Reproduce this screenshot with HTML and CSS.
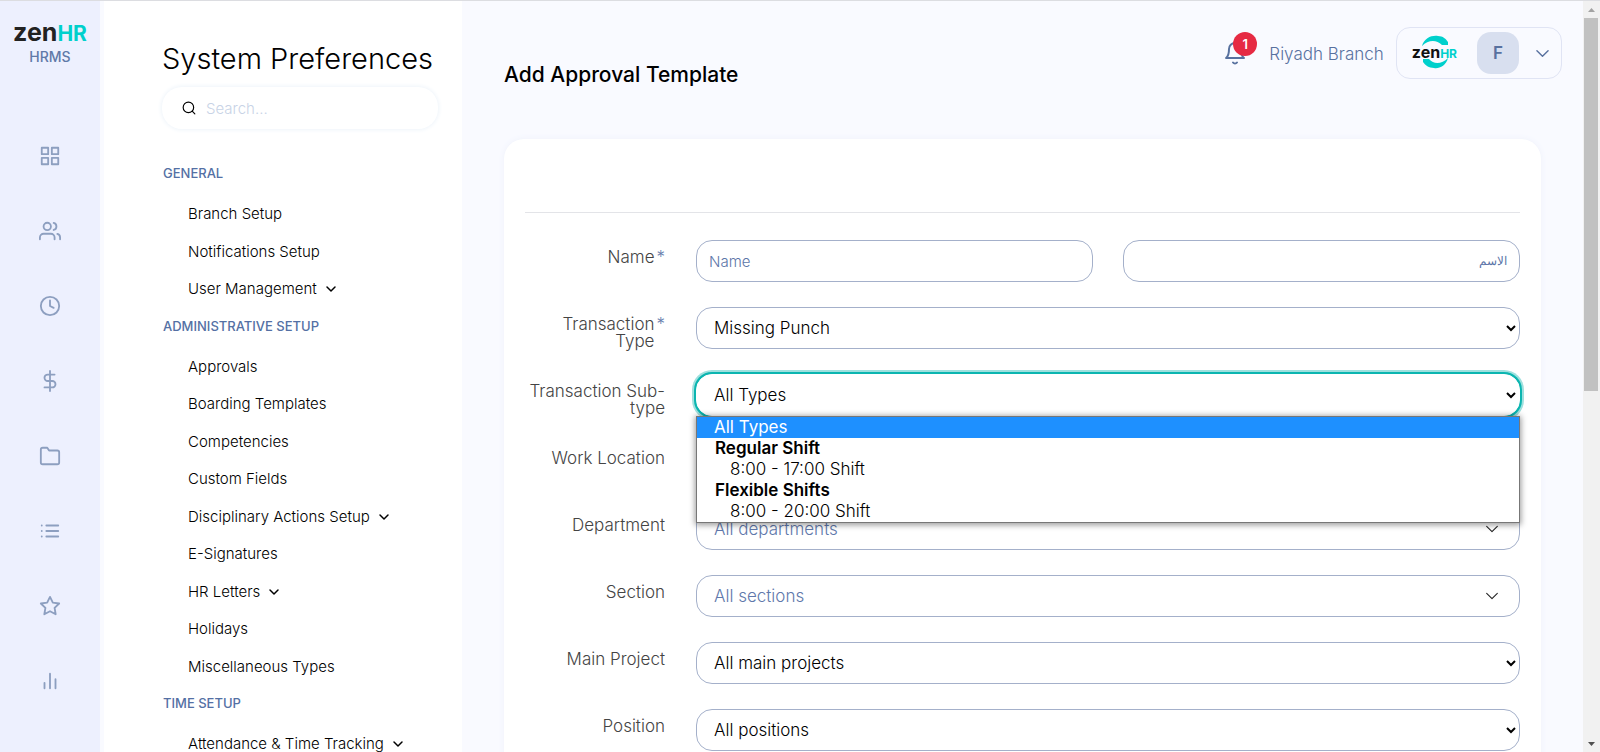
FILE: index.html
```html
<!DOCTYPE html>
<html lang="en">
<head>
<meta charset="utf-8">
<meta name="viewport" content="width=device-width, initial-scale=1">
<title>System Preferences - Add Approval Template</title>
<link rel="stylesheet" href="styles.css">
</head>
<body>
<svg class="sprite" aria-hidden="true">
  <symbol id="chevron" viewBox="0 0 12 12"><path d="M2 4l4 4 4-4"/></symbol>
</svg>
<div class="app">
  <nav class="rail" aria-label="Main">
    <a class="brand" href="#"><span class="logo"><span class="logo-zen">zen</span><span class="logo-hr">HR</span></span><span class="brand-sub">HRMS</span></a>
    <div class="rail-links">
      <a href="#" aria-label="Dashboard"><svg viewBox="0 0 24 24"><path d="M3 3h7v7H3zM14 3h7v7h-7zM14 14h7v7h-7zM3 14h7v7H3z"/></svg></a>
      <a href="#" aria-label="Employees"><svg viewBox="0 0 24 24"><path d="M17 21v-2a4 4 0 0 0-4-4H5a4 4 0 0 0-4 4v2M23 21v-2a4 4 0 0 0-3-3.87M16 3.13a4 4 0 0 1 0 7.75"/><circle cx="9" cy="7" r="4"/></svg></a>
      <a href="#" aria-label="Time"><svg viewBox="0 0 24 24"><circle cx="12" cy="12" r="10"/><path d="M12 6v6l4 2"/></svg></a>
      <a href="#" aria-label="Payroll"><svg viewBox="0 0 24 24"><path d="M12 1v22M17 5H9.500a3.500 3.500 0 0 0 0 7h5a3.500 3.500 0 0 1 0 7H6"/></svg></a>
      <a href="#" aria-label="Documents"><svg viewBox="0 0 24 24"><path d="M22 19a2 2 0 0 1-2 2H4a2 2 0 0 1-2-2V5a2 2 0 0 1 2-2h5l2 3h9a2 2 0 0 1 2 2z"/></svg></a>
      <a href="#" aria-label="Lists"><svg viewBox="0 0 24 24"><path d="M8 6h13M8 12h13M8 18h13M3 6h.01M3 12h.01M3 18h.01"/></svg></a>
      <a href="#" aria-label="Performance"><svg viewBox="0 0 24 24"><path d="M12 2l3.090 6.260L22 9.270l-5 4.870 1.180 6.880L12 17.770l-6.180 3.250L7 14.140 2 9.270l6.910-1.010z"/></svg></a>
      <a href="#" aria-label="Reports"><svg viewBox="0 0 24 24"><path d="M18 20V10M12 20V4M6 20v-6"/></svg></a>
    </div>
  </nav>

  <aside class="sidebar">
    <h1>System Preferences</h1>
    <label class="search">
      <svg viewBox="0 0 24 24" aria-hidden="true"><circle cx="11" cy="11" r="9"/><path d="M17.500 17.500L22 22"/></svg>
      <input type="search" placeholder="Search..." aria-label="Search">
    </label>
    <h2>General</h2>
    <ul>
      <li><a href="#">Branch Setup</a></li>
      <li><a href="#">Notifications Setup</a></li>
      <li><a href="#">User Management<svg><use href="#chevron"/></svg></a></li>
    </ul>
    <h2>Administrative Setup</h2>
    <ul>
      <li><a href="#">Approvals</a></li>
      <li><a href="#">Boarding Templates</a></li>
      <li><a href="#">Competencies</a></li>
      <li><a href="#">Custom Fields</a></li>
      <li><a href="#">Disciplinary Actions Setup<svg><use href="#chevron"/></svg></a></li>
      <li><a href="#">E-Signatures</a></li>
      <li><a href="#">HR Letters<svg><use href="#chevron"/></svg></a></li>
      <li><a href="#">Holidays</a></li>
      <li><a href="#">Miscellaneous Types</a></li>
    </ul>
    <h2>Time Setup</h2>
    <ul>
      <li><a href="#">Attendance &amp; Time Tracking<svg><use href="#chevron"/></svg></a></li>
    </ul>
  </aside>

  <main class="main">
    <header class="topbar">
      <h2 class="page-title">Add Approval Template</h2>
      <div class="tools">
        <button class="bell" type="button" aria-label="Notifications">
          <svg viewBox="0 0 24 24"><path d="M18 8A6 6 0 0 0 6 8c0 7-3 9-3 9h18s-3-2-3-9M14 21.500a2.500 2.500 0 0 1-4 0"/></svg>
          <span class="badge">1</span>
        </button>
        <span class="branch">Riyadh Branch</span>
        <button class="account" type="button" aria-label="Account menu">
          <span class="company">
            <svg viewBox="0 0 46 34" aria-hidden="true"><path d="M10 11C12 3 20 0 26 1c5 0 8 3 10 6v3H30C24 4 16 5 10 11zM36 23C34 31 27 34 22 33c-5 0-9-3-11-6v-3h6c5 6 13 5 19-1z"/></svg>
            <span class="logo logo-small"><span class="logo-zen">zen</span><span class="logo-hr">HR</span></span>
          </span>
          <span class="avatar">F</span>
          <svg class="account-arrow" viewBox="0 0 14 14"><path d="M1 4l6 6 6-6"/></svg>
        </button>
      </div>
    </header>

    <form class="card">
      <hr>
      <div class="row">
        <label for="name"><span>Name</span><span class="req">*</span></label>
        <div class="pair">
          <input id="name" class="control" type="text" placeholder="Name">
          <input class="control" type="text" dir="rtl" lang="ar" placeholder="الاسم" aria-label="الاسم">
        </div>
      </div>
      <div class="row">
        <label for="type"><span>Transaction Type</span><span class="req">*</span></label>
        <select id="type" class="control"><option>Missing Punch</option></select>
      </div>
      <div class="row">
        <label for="subtype">Transaction Sub-type</label>
        <div class="field">
          <select id="subtype" class="control active"><option>All Types</option></select>
          <div class="menu" role="listbox" aria-label="Transaction Sub-type">
            <div class="option selected" role="option" aria-selected="true">All Types</div>
            <div class="group">Regular Shift</div>
            <div class="option child" role="option">8:00 - 17:00 Shift</div>
            <div class="group">Flexible Shifts</div>
            <div class="option child" role="option">8:00 - 20:00 Shift</div>
          </div>
        </div>
      </div>
      <div class="row">
        <label for="location">Work Location</label>
        <select id="location" class="control"><option></option></select>
      </div>
      <div class="row">
        <label for="department">Department</label>
        <div class="field">
          <select id="department" class="control muted"><option>All departments</option></select>
          <svg class="field-arrow"><use href="#chevron"/></svg>
        </div>
      </div>
      <div class="row">
        <label for="section">Section</label>
        <div class="field">
          <select id="section" class="control muted"><option>All sections</option></select>
          <svg class="field-arrow"><use href="#chevron"/></svg>
        </div>
      </div>
      <div class="row">
        <label for="project">Main Project</label>
        <select id="project" class="control"><option>All main projects</option></select>
      </div>
      <div class="row">
        <label for="position">Position</label>
        <select id="position" class="control"><option>All positions</option></select>
      </div>
    </form>
  </main>

  <div class="scrollbar" aria-hidden="true">
    <svg viewBox="0 0 17 17"><path d="M5 11l3.500-4 3.500 4z" fill="#a3a3a3"/></svg>
    <div class="track"><div class="thumb"></div></div>
    <svg viewBox="0 0 17 17"><path d="M5 7l3.500 4L12 7z" fill="#505050"/></svg>
  </div>
</div>
</body>
</html>
```

FILE: styles.css
```css
*, *::before, *::after { box-sizing: border-box; }

body {
  margin: 0;
  font-family: Inter, "Liberation Sans", sans-serif;
  font-size: 15px;
  font-weight: 300;
  color: #000;
  background: #f9faff;
}

a { color: inherit; text-decoration: none; }
button { font: inherit; background: none; border: 0; padding: 0; }
svg { fill: none; stroke: currentColor; stroke-width: 2; stroke-linecap: round; stroke-linejoin: round; }
.sprite { display: none; }

.app {
  display: grid;
  grid-template-columns: 104px 358px minmax(0, 1fr) 17px;
  height: 100vh;
  overflow: hidden;
  border-top: 1px solid #dcdde1;
}

/* Icon rail */
.rail {
  background: #edf0fe;
  border-right: 4px solid #f9faff;
  color: #8d9fc0;
}
.brand { display: flex; flex-direction: column; align-items: center; padding-top: 16px; }
.logo { display: flex; align-items: baseline; font-weight: 700; color: #222; line-height: 30px; }
.logo-zen { font-size: 25px; }
.logo-hr { font-size: 21px; color: #00d0cc; }
.brand-sub { font-size: 14px; line-height: 16px; font-weight: 500; color: #6079a8; }
.rail-links { display: flex; flex-direction: column; padding-top: 53px; }
.rail-links a { display: grid; place-items: center; height: 75px; }
.rail-links svg { width: 22px; height: 22px; }

/* Preferences sidebar */
.sidebar { background: #fff; padding: 40px 24px 0 58px; overflow: hidden; }
.sidebar h1 { margin: 0 0 10px; font-size: 29px; line-height: 36px; font-weight: 300; white-space: nowrap; }
.search {
  display: flex;
  align-items: center;
  gap: 8px;
  height: 42px;
  padding: 0 20px;
  border-radius: 20px;
  box-shadow: 0 0 4px 1px #eef4fa;
}
.search svg { width: 14px; height: 14px; flex: none; }
.search input { width: 100%; border: 0; outline: 0; background: none; font: inherit; color: inherit; }
.search input::placeholder { color: #c8d3e6; }
.sidebar h2 {
  margin: 0;
  padding: 9px 1px 15px;
  font-size: 13px;
  line-height: 16px;
  font-weight: 500;
  text-transform: uppercase;
  color: #5470a4;
}
.search + h2 { padding-top: 36px; }
.sidebar ul { list-style: none; margin: 0; padding: 0 0 0 26px; }
.sidebar li a { display: flex; align-items: center; padding: 7px 0 8px; line-height: 1.5; white-space: nowrap; }
.sidebar li svg { width: 12px; height: 12px; margin-left: 8px; stroke-width: 1.5; }

/* Top bar */
.main { padding: 0 42px; overflow: hidden; }
.topbar { display: flex; justify-content: space-between; height: 138px; margin-right: -21px; }
.page-title { margin: 60px 0 0; font-size: 21px; line-height: 28px; font-weight: 500; white-space: nowrap; }
.tools { display: flex; align-items: center; height: 52px; margin-top: 26px; color: #58719f; }
.bell { position: relative; display: flex; color: inherit; margin-right: 22px; }
.bell svg { width: 24px; height: 24px; }
.badge {
  position: absolute;
  top: -9px;
  right: -10px;
  width: 24px;
  height: 24px;
  border-radius: 50%;
  background: #e62a43;
  color: #fff;
  font-size: 13px;
  line-height: 24px;
  font-weight: 600;
  text-align: center;
}
.branch { font-size: 17px; line-height: 20px; margin-right: 12px; padding-top: 2px; }
.account {
  display: flex;
  align-items: center;
  height: 52px;
  padding: 0 12px 0 15px;
  border: 1px solid #e0e4f4;
  border-radius: 14px;
  color: inherit;
}
.company { position: relative; display: flex; align-items: center; margin-right: 20px; }
.company svg { position: absolute; inset: -9px 0; width: 46px; height: 34px; fill: #00d0cc; stroke: none; }
.logo-small { position: relative; line-height: 16px; color: #111; }
.logo-small .logo-zen { font-size: 16px; }
.logo-small .logo-hr { font-size: 12px; }
.avatar { width: 42px; height: 42px; border-radius: 14px; background: #d8dfef; font-size: 17px; line-height: 42px; font-weight: 600; text-align: center; }
.account-arrow { width: 13px; height: 13px; margin-left: 17px; stroke-width: 1.5; }

/* Form */
.card {
  background: #fff;
  border-radius: 20px 20px 0 0;
  box-shadow: 0 0 6px #eef1fa;
  padding: 73px 21px 0;
  min-height: 100vh;
}
.card hr { height: 1px; margin: 0 0 27px; border: 0; background: #e3e4e8; }
.row { display: grid; grid-template-columns: 140px minmax(0, 1fr); column-gap: 31px; height: 42px; margin-bottom: 25px; }
.row label { display: flex; justify-content: flex-end; padding-top: 9px; font-size: 17px; line-height: 17px; text-align: right; color: #444; }
.req { margin-left: 2px; color: #6a7fae; flex: none; }
.pair { display: grid; grid-template-columns: 1fr 1fr; gap: 30px; }
.field { position: relative; }
.control {
  display: block;
  width: 100%;
  height: 42px;
  border: 1px solid #a4b0ca;
  border-radius: 16px;
  background: #fff;
  color: #000;
  font: inherit;
  font-size: 17px;
  outline: 0;
}
input.control { padding: 0 12px; font-size: 15px; }
input.control::placeholder { color: #5c76a8; }
input[lang="ar"].control { font-family: "Liberation Serif", "DejaVu Sans", serif; font-size: 12px; }
select.control { padding: 0 1px 0 13px; }
select.muted { appearance: none; padding-left: 17px; color: #6078ab; }
select.active { border-color: #fff; box-shadow: 0 0 0 2px #0bb5b0, 0 0 0 4px #9fe0de; }
.field-arrow { position: absolute; right: 20px; top: 13px; width: 16px; height: 16px; stroke-width: 0.8; color: #222; pointer-events: none; }
.menu {
  position: absolute;
  z-index: 2;
  top: 42px;
  left: 0;
  right: 0;
  border: 1px solid #777;
  background: #fff;
  box-shadow: 0 1px 6px 1px rgba(0, 0, 0, 0.4);
  font-size: 17px;
  line-height: 21px;
}
.option { padding-left: 17px; }
.option.child { padding-left: 33px; }
.option.selected { background: #1e90ff; color: #fff; font-weight: 400; }
.group { padding-left: 18px; font-weight: 600; }

/* Scrollbar */
.scrollbar { display: flex; flex-direction: column; background: #f1f1f1; }
.scrollbar svg { width: 17px; height: 17px; flex: none; stroke: none; }
.track { flex: 1; padding: 0 2px 0 1px; }
.thumb { height: 52%; background: #c1c1c1; }
```
